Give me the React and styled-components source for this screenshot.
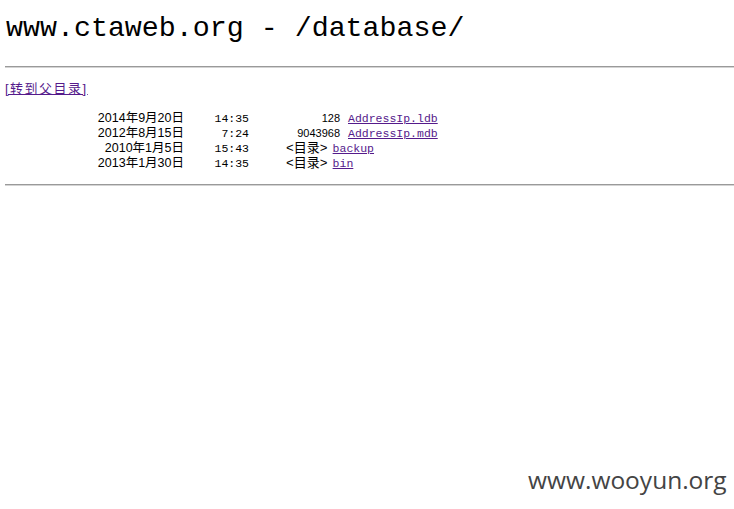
import React from "react";
import styled, { createGlobalStyle } from "styled-components";

const Global = createGlobalStyle`
  html, body { margin: 0; padding: 0; background: #fff; }
  body { width: 734px; height: 509px; overflow: hidden; }
`;

const Page = styled.div`
  position: relative;
  box-sizing: border-box;
  width: 734px;
  height: 509px;
  padding-left: 5px;
  color: #000;
  font-family: "Liberation Sans", "Noto Sans CJK SC", sans-serif;
`;

const Title = styled.h1`
  margin: 11px 0 0 1px;
  font-family: "Liberation Mono", "Noto Sans CJK SC", monospace;
  font-weight: normal;
  font-size: 28.3px;
  line-height: 34px;
  white-space: nowrap;
`;

const Rule = styled.hr`
  margin: ${(p) => p.$top}px 0 0 0;
  height: 0;
  border: 0;
  border-top: 1px solid #9a9a9a;
  border-bottom: 1px solid #d4d4d4;
`;

const Nav = styled.div`
  margin-top: 13px;
  height: 15px;
  line-height: 15px;
  font-size: 13px;
  letter-spacing: 1.5px;
`;

const Link = styled.a`
  color: #551a8b;
  text-decoration: underline;
`;

const Listing = styled.div`
  display: flex;
  flex-direction: column;
  margin-top: 15px;
`;

const Row = styled.div`
  display: grid;
  grid-template-columns: 179px 65px auto;
  align-items: baseline;
  height: 15px;
  line-height: 15px;
  white-space: nowrap;
`;

const DateCell = styled.span`
  text-align: right;
  font-size: 12.5px;
`;

const TimeCell = styled.span`
  text-align: right;
  font-family: "Liberation Mono", monospace;
  font-size: 11.5px;
`;

const Entry = styled.span`
  display: flex;
  align-items: baseline;
`;

const SizeBox = styled.span`
  width: 91px;
  text-align: right;
  font-size: 11px;
`;

const DirMark = styled.span`
  margin-left: 37px;
  font-size: 13px;
  font-family: "Liberation Mono", "Noto Sans CJK SC", monospace;
`;

const NameLink = styled(Link)`
  margin-left: ${(p) => (p.$dir ? 5 : 8)}px;
  font-family: "Liberation Mono", monospace;
  font-size: 11.5px;
`;

const Watermark = styled.div`
  position: absolute;
  left: 528px;
  top: 457px;
  font-family: "Open Sans", sans-serif;
  font-size: 24.5px;
  line-height: 24px;
  color: #444;
`;

const entries = [
  { date: "2014年9月20日", time: "14:35", size: "128", name: "AddressIp.ldb" },
  { date: "2012年8月15日", time: "7:24", size: "9043968", name: "AddressIp.mdb" },
  { date: "2010年1月5日", time: "15:43", dir: true, name: "backup" },
  { date: "2013年1月30日", time: "14:35", dir: true, name: "bin" },
];

export default function App() {
  return (
    <Page>
      <Global />
      <Title>www.ctaweb.org - /database/</Title>
      <Rule $top={21} />
      <Nav>
        <Link href="#">[转到父目录]</Link>
      </Nav>
      <Listing>
        {entries.map((e) => (
          <Row key={e.name}>
            <DateCell>{e.date}</DateCell>
            <TimeCell>{e.time}</TimeCell>
            <Entry>
              {e.dir ? <DirMark>&lt;目录&gt;</DirMark> : <SizeBox>{e.size}</SizeBox>}
              <NameLink href="#" $dir={e.dir}>
                {e.name}
              </NameLink>
            </Entry>
          </Row>
        ))}
      </Listing>
      <Rule $top={13} />
      <Watermark>www.wooyun.org</Watermark>
    </Page>
  );
}
